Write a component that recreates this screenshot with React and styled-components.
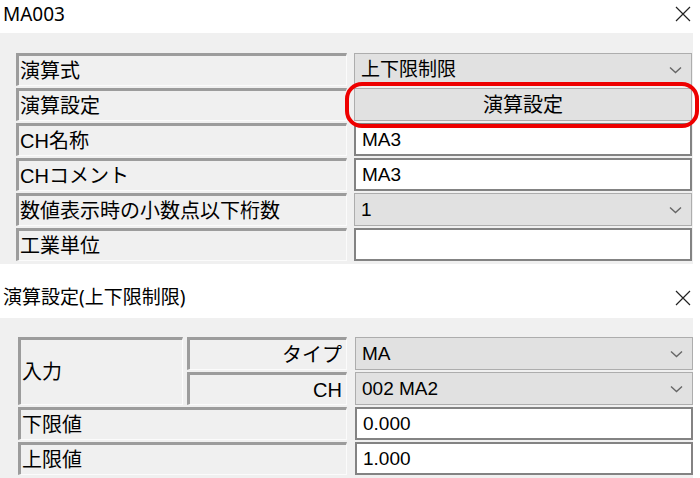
import * as React from "react"
import styled, { createGlobalStyle } from "styled-components"

const GlobalStyle = createGlobalStyle`
  html, body {
    margin: 0;
    padding: 0;
    background: #ffffff;
  }
  body {
    width: 700px;
    height: 478px;
    overflow: hidden;
    font-family: "Liberation Sans", "Noto Sans CJK JP", sans-serif;
    color: #000;
  }
`

const Chevron = () => (
  <svg width="13" height="8" viewBox="0 0 13 8">
    <path d="M1 1.5 L6.5 6.5 L12 1.5" fill="none" stroke="#666" strokeWidth="1.4" />
  </svg>
)

const CloseIcon = () => (
  <svg width="16" height="16" viewBox="0 0 16 16">
    <path d="M1 1 L15 15 M15 1 L1 15" fill="none" stroke="#222" strokeWidth="1.2" />
  </svg>
)

const Page = styled.div`
  width: 700px;
  display: flex;
  flex-direction: column;
`

const TitleBar = styled.div`
  height: ${props => props.$height}px;
  box-sizing: border-box;
  display: flex;
  align-items: ${props => (props.$bottom ? "flex-end" : "center")};
  justify-content: space-between;
  padding: 0 9px ${props => props.$padBottom}px 3px;
  font-family: "Noto Sans", "Noto Sans CJK JP", sans-serif;
  font-size: 19px;
  line-height: 22px;
  background: #ffffff;

  svg {
    margin-bottom: ${props => (props.$bottom ? 2 : 0)}px;
  }
`

const Select = styled.div`
  box-sizing: border-box;
  display: flex;
  align-items: center;
  justify-content: space-between;
  background: #e1e1e1;
  border: 1px solid #adadad;
  padding: 0 9px 0 6px;
  font-size: 19px;
  line-height: 1;
`

const Field = styled.div`
  box-sizing: border-box;
  display: flex;
  align-items: center;
  background: #ffffff;
  border: 2px solid #838383;
  padding: 0 6px;
  font-size: 19px;
  line-height: 1;
`

const Panel = styled.div`
  width: 693px;
  height: ${props => props.$height}px;
  box-sizing: border-box;
  background: #f0f0f0;
  display: grid;
  grid-template-columns: ${props => props.$columns};
  grid-auto-rows: 33px;
  row-gap: 2px;
  column-gap: ${props => props.$gap}px;
  padding: ${props => props.$pad};
  align-content: start;

  & > ${Select}, & > ${Field} {
    margin-left: ${props => props.$valueOffset || 0}px;
  }
`

const Label = styled.div`
  grid-column: ${props => (props.$span ? `span ${props.$span}` : "auto")};
  grid-row: ${props => (props.$rows ? `span ${props.$rows}` : "auto")};
  box-sizing: border-box;
  display: flex;
  align-items: center;
  justify-content: ${props => (props.$right ? "flex-end" : "flex-start")};
  background: #f0f0f0;
  border-top: 3px solid #9c9c9c;
  border-left: 3px solid #9c9c9c;
  border-right: 1px solid #fbfbfb;
  border-bottom: 1px solid #fbfbfb;
  padding: 0 4px 0 1px;
  font-size: 20px;
  line-height: 1;
  white-space: nowrap;
`

const ButtonWrap = styled.div`
  position: relative;
  display: flex;
`

const Button = styled.div`
  flex: 1;
  box-sizing: border-box;
  display: flex;
  align-items: center;
  justify-content: center;
  background: #e1e1e1;
  border: 1px solid #adadad;
  font-size: 20px;
  line-height: 1;
`

const Highlight = styled.div`
  position: absolute;
  top: -6px;
  bottom: -7px;
  left: -9px;
  right: -7px;
  border: 4px solid #ee0000;
  border-radius: 17px;
  pointer-events: none;
`

const App = () => (
  <>
    <GlobalStyle />
    <Page>
      <TitleBar $height={33} $padBottom={6}>
        <span>MA003</span>
        <CloseIcon />
      </TitleBar>
      <Panel $columns="331px 338px" $gap={7} $pad="20px 1px 1px 16px" $height={231}>
        <Label>演算式</Label>
        <Select>
          <span>上下限制限</span>
          <Chevron />
        </Select>
        <Label>演算設定</Label>
        <ButtonWrap>
          <Button>演算設定</Button>
          <Highlight />
        </ButtonWrap>
        <Label>CH名称</Label>
        <Field>MA3</Field>
        <Label>CHコメント</Label>
        <Field>MA3</Field>
        <Label>数値表示時の小数点以下桁数</Label>
        <Select>
          <span>1</span>
          <Chevron />
        </Select>
        <Label>工業単位</Label>
        <Field />
      </Panel>

      <TitleBar $height={54} $padBottom={10} $bottom>
        <span>演算設定(上下限制限)</span>
        <CloseIcon />
      </TitleBar>
      <Panel
        $columns="165px 160px 342px"
        $gap={4}
        $valueOffset={4}
        $pad="19px 0 0 18px"
        $height={160}
      >
        <Label $rows={2}>入力</Label>
        <Label $right>タイプ</Label>
        <Select>
          <span>MA</span>
          <Chevron />
        </Select>
        <Label $right>CH</Label>
        <Select>
          <span>002 MA2</span>
          <Chevron />
        </Select>
        <Label $span={2}>下限値</Label>
        <Field>0.000</Field>
        <Label $span={2}>上限値</Label>
        <Field>1.000</Field>
      </Panel>
    </Page>
  </>
)

export default App
